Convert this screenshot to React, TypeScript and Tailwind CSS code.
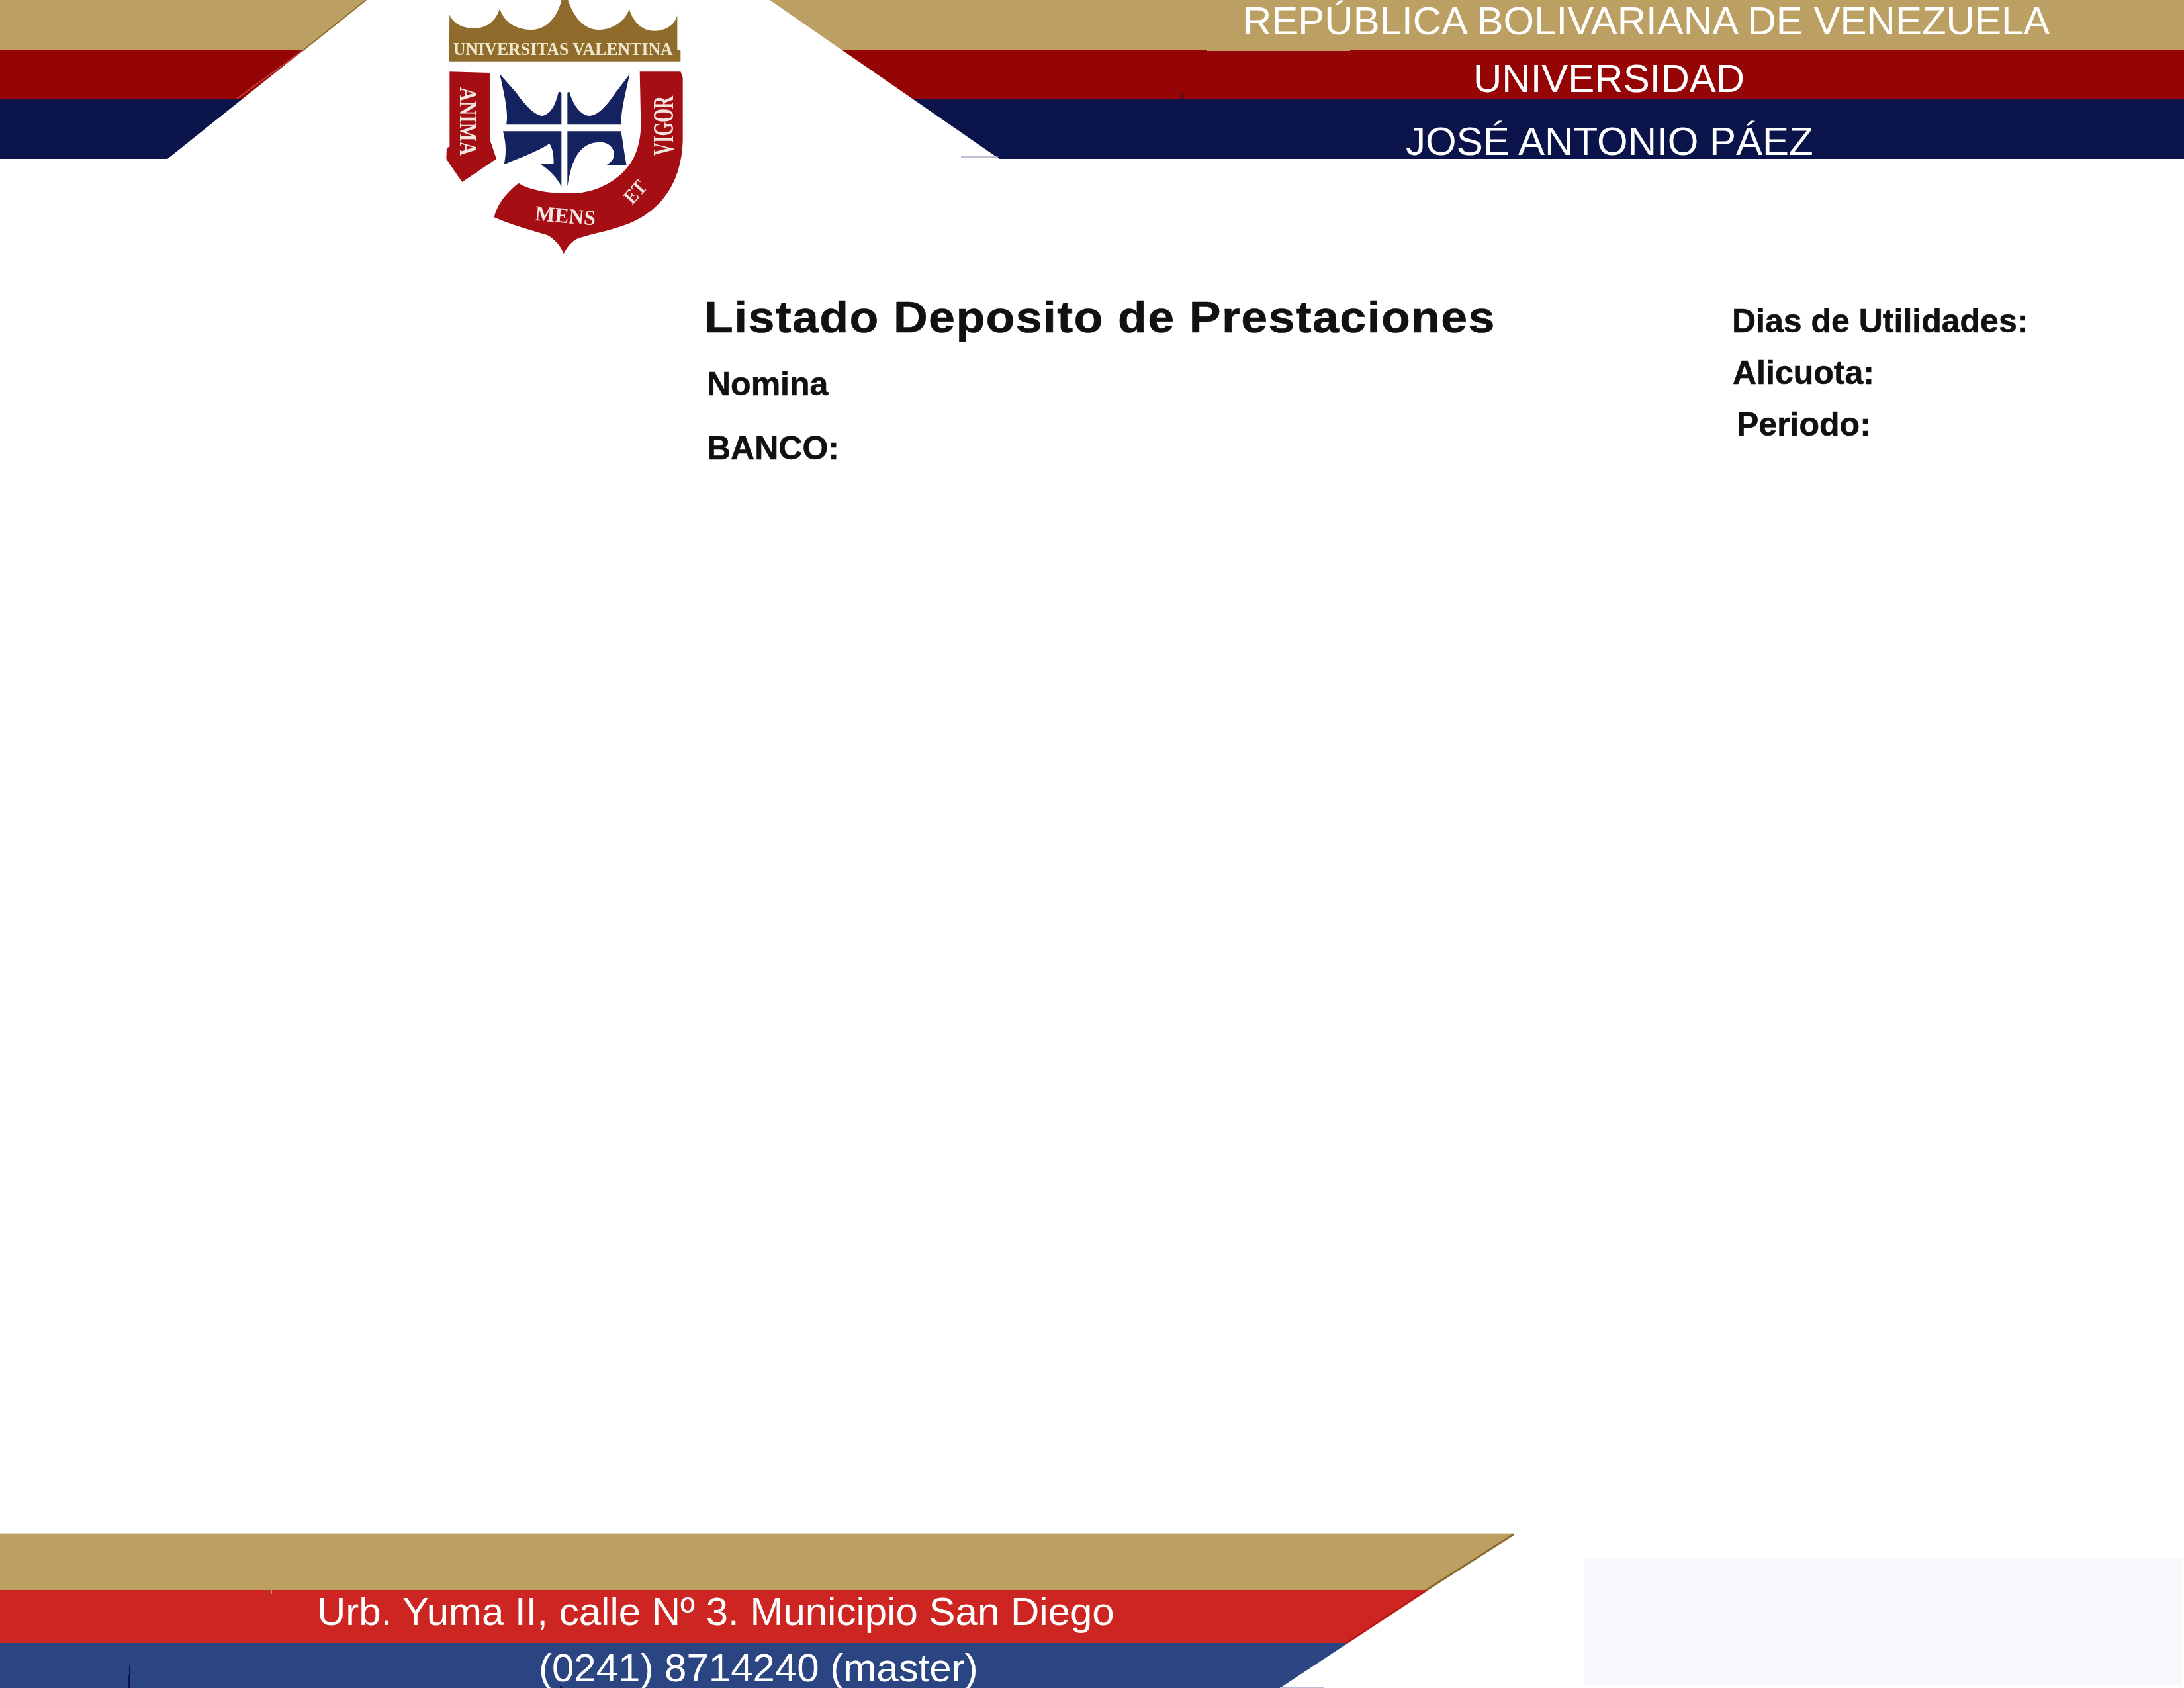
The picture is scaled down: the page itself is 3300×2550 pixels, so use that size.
const sans = "font-['Liberation_Sans',Arial,sans-serif]";

function Logo() {
  return (
    <svg viewBox="0 0 1260 1200" className="absolute left-[640px] top-0 w-[420px] h-[400px] blur-[0.7px]">
      <path
        d="M118 65C130 105 180 130 235 128C290 128 330 90 345 40C365 100 420 135 490 135C560 135 610 70 625 0L655 0C680 80 730 135 795 135C860 135 920 90 932 40C950 100 990 140 1045 140C1100 140 1140 110 1150 70L1150 225L1165 228L1165 278L115 278Z"
        fill="#8f6b2c"
      />
      <text x="135" y="250" fontFamily="Liberation Serif" fontWeight="700" fontSize="82" fill="#efe7cc" textLength="995" lengthAdjust="spacingAndGlyphs">
        UNIVERSITAS VALENTINA
      </text>
      <path d="M118 325L300 330L303 640L330 720L175 825L150 790L103 720L105 670L118 665Z" fill="#a50f14" />
      <path
        d="M980 325L1165 325L1175 350L1175 640C1170 800 1100 930 960 1000C880 1040 780 1055 700 1080C670 1095 650 1120 635 1150C620 1110 590 1080 560 1065C480 1040 400 1020 320 985C335 920 380 870 430 830C500 870 600 880 700 875C800 865 900 810 950 720C975 670 985 620 985 560Z"
        fill="#a50f14"
      />
      <path d="M345 335L420 420C470 490 510 525 540 525C580 515 600 470 612 415L625 420L625 565L375 565C385 520 370 440 345 335Z" fill="#14225f" />
      <path d="M935 335L870 420C830 480 790 525 750 525C710 520 680 480 660 415L652 420L652 565L895 565C895 510 910 440 935 335Z" fill="#14225f" />
      <path d="M360 595L625 595L625 845C600 800 570 770 530 745L590 740C590 700 585 670 570 650C530 680 450 710 365 745C375 700 375 650 360 595Z" fill="#14225f" />
      <path d="M652 595L895 595C905 650 910 700 920 750L825 750C860 730 870 710 860 680C840 640 800 640 760 650C700 670 670 730 652 845Z" fill="#14225f" />
      <g fontFamily="Liberation Serif" fontWeight="700" fill="#f3e4e0" textAnchor="middle">
        <text transform="translate(165 550) rotate(90)" fontSize="108" textLength="310" lengthAdjust="spacingAndGlyphs">ANIMA</text>
        <text transform="translate(1130 570) rotate(-90)" fontSize="130" textLength="270" lengthAdjust="spacingAndGlyphs">VIGOR</text>
        <text transform="translate(982 890) rotate(-48)" fontSize="92" textLength="105" lengthAdjust="spacingAndGlyphs">ET</text>
        <text transform="translate(640 1010) rotate(5)" fontSize="98" textLength="275" lengthAdjust="spacingAndGlyphs">MENS</text>
      </g>
    </svg>
  );
}

function Header() {
  return (
    <header className={`relative h-[240px] flex flex-col text-white text-[60px] ${sans}`}>
      <div className="h-[76px] bg-[#bca063] pl-[1878px] leading-[64px] whitespace-nowrap">REPÚBLICA BOLIVARIANA DE VENEZUELA</div>
      <div className="h-[73px] bg-[#960505] pl-[2226px] pt-[13px] leading-[60px] whitespace-nowrap">UNIVERSIDAD</div>
      <div className="h-[91px] bg-[#0a144a] pl-[2124px] pt-[39px] leading-[52px] whitespace-nowrap">JOSÉ ANTONIO PÁEZ</div>
      <svg viewBox="0 0 3300 240" className="absolute inset-0 w-[3300px] h-[240px]">
        <polygon points="553,0 253,240 1510,240 1163,0" fill="#ffffff" />
        <line x1="553" y1="0" x2="458" y2="76" stroke="#8f6b2c" strokeWidth="2" />
        <line x1="458" y1="76" x2="358" y2="149" stroke="#c2403f" strokeWidth="2" />
        <line x1="1452" y1="237" x2="1508" y2="237" stroke="#a9adc8" strokeWidth="1.5" />
        <rect x="1824" y="75" width="216" height="2" fill="#bca063" />
        <rect x="1786" y="142" width="2" height="7" fill="#0a144a" />
      </svg>
      <Logo />
    </header>
  );
}

function Report() {
  return (
    <main className={`flex pl-[1064px] pt-[200px] font-bold text-[#111111] blur-[0.6px] [-webkit-text-stroke:0.6px_#111111] ${sans}`}>
      <div className="w-[1553px] flex flex-col">
        <h1 className="text-[67px] leading-[77px] tracking-[1.3px] whitespace-nowrap origin-left scale-x-[1.07]">Listado Deposito de Prestaciones</h1>
        <p className="text-[50px] leading-[97px] pl-[4px] mt-[15px]">Nomina</p>
        <p className="text-[50px] leading-[97px] pl-[4px]">BANCO:</p>
      </div>
      <div className="flex flex-col text-[50px] leading-[78px] pt-[6px]">
        <p className="whitespace-nowrap">Dias de Utilidades:</p>
        <p className="pl-[1px]">Alicuota:</p>
        <p className="pl-[7px]">Periodo:</p>
      </div>
    </main>
  );
}

function Footer() {
  return (
    <footer className={`relative mt-auto h-[234px] flex flex-col text-white text-[60px] ${sans}`}>
      <div className="h-[2px] bg-[#e6dccb]" />
      <div className="h-[84px] bg-[#bd9f61]" />
      <div className="h-[80px] bg-[#cc2522] pl-[479px] leading-[66px] whitespace-nowrap">Urb. Yuma II, calle Nº 3. Municipio San Diego</div>
      <div className="h-[68px] bg-[#2b4482] pl-[814px] pt-[12px] leading-[52px] whitespace-nowrap">(0241) 8714240 (master)</div>
      <svg viewBox="0 0 1366 234" className="absolute left-[1934px] top-0 w-[1366px] h-[234px]">
        <polygon points="355,0 0,234 1366,234 1366,0" fill="#ffffff" />
        <line x1="353" y1="2" x2="221" y2="86" stroke="#8a6a2e" strokeWidth="3" />
        <line x1="221" y1="86" x2="100" y2="166" stroke="#b01818" strokeWidth="2" />
        <rect x="0" y="232" width="67" height="2" fill="#b8bed6" />
      </svg>
      <svg viewBox="0 0 860 234" className="absolute left-0 top-0 w-[860px] h-[234px]">
        <rect x="409" y="86" width="2" height="6" fill="#bd9f61" />
        <rect x="195" y="199" width="1" height="15" fill="#0a144a" />
        <rect x="194" y="214" width="2" height="20" fill="#0a144a" />
        <rect x="846" y="231" width="3" height="3" fill="#0a144a" />
      </svg>
      <div className="absolute left-[2394px] top-[37px] w-[903px] h-[193px] bg-[#f8f8fc]" />
    </footer>
  );
}

export default function App() {
  return (
    <div className="w-[3300px] h-[2550px] bg-white flex flex-col overflow-hidden">
      <Header />
      <Report />
      <Footer />
    </div>
  );
}
